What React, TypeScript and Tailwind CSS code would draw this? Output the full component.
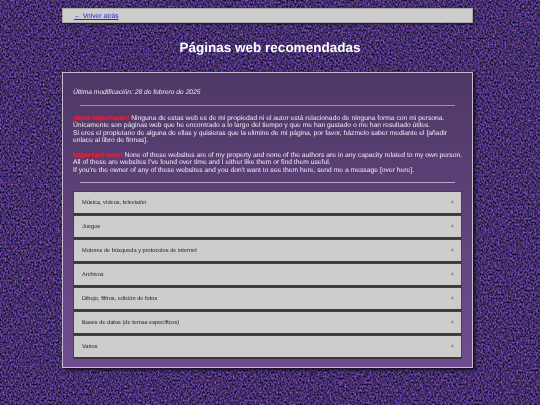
const items = [
  "Música, vídeos, televisión",
  "Juegos",
  "Motores de búsqueda y protocolos de internet",
  "Archivos",
  "Dibujo, filtros, edición de fotos",
  "Bases de datos (de temas específicos)",
  "Varios",
];

const RED = "font-bold text-[#f02838] [text-shadow:0_0_1.5px_#e00020]";

export default function App() {
  return (
    <div className="relative w-[540px] h-[405px] overflow-hidden bg-[#2e2444] font-['Liberation_Sans',Arial,sans-serif] [text-rendering:geometricPrecision]">
      <svg className="absolute inset-0" width="540" height="405" aria-hidden="true">
        <filter id="noise" x="0" y="0" width="100%" height="100%" colorInterpolationFilters="sRGB">
          <feTurbulence type="fractalNoise" baseFrequency="0.6 0.5" numOctaves="2" seed="7" />
          <feColorMatrix
            type="matrix"
            values="0.9 0 0 0 -0.18  0.5 0 0 0 -0.07  1 0.5 0 0 -0.32  0 0 0 0 1"
          />
          <feGaussianBlur stdDeviation="0.35" />
        </filter>
        <rect width="540" height="405" filter="url(#noise)" />
      </svg>
      <div className="relative w-[411px] ml-[62px] pt-2 blur-[0.3px]">
        <div className="h-[15px] flex items-center pl-[11px] pt-[3px] bg-[#cccccc] border border-[#a8a8a8] shadow-[1px_1px_2px_#1a1428]">
          <a href="#" className="text-[6.8px] leading-none text-[#2222ee] underline">← Volver atrás</a>
        </div>
        <h1 className="mt-[16px] h-[17px] pl-[5px] text-center text-[13.5px] leading-[17px] font-bold text-white">
          Páginas web recomendadas
        </h1>
        <div className="mt-[16px] h-[296px] px-[10px] pt-[16px] border border-[#c4bed0] bg-gradient-to-b from-[#4e3866] to-[#704d90] shadow-[2px_2px_3px_#120d1c] text-[#f0eaf5] text-[6.75px] leading-[7.6px]">
          <p className="italic text-[6.7px] leading-[8px]">Última modificación: 28 de febrero de 2025</p>
          <div className="mt-[7.5px] mx-[7px] h-px bg-[#9f90b4]" />
          <p className="mt-[9px] whitespace-nowrap">
            <span className={RED}>¡Nota importante!</span> Ninguna de estas web es de mi propiedad ni el autor está relacionado de ninguna forma con mi persona.<br />
            Únicamente son páginas web que he encontrado a lo largo del tiempo y que me han gustado o me han resultado útiles.<br />
            Si eres el propietario de alguna de ellas y quisieras que la elimine de mi página, por favor, házmelo saber mediante el [añadir<br />
            enlace al libro de firmas].
          </p>
          <p className="mt-[7px] whitespace-nowrap">
            <span className={RED}>Important note!</span> None of these websites are of my property and none of the authors are in any capacity related to my own person.<br />
            All of these are websites I've found over time and I either like them or find them useful.<br />
            If you're the owner of any of these websites and you don't want to see them here, send me a message [over here].
          </p>
          <div className="mt-[7px] mx-[7px] h-px bg-[#b5a8c8]" />
          <div className="mt-2 flex flex-col">
            {items.map((t) => (
              <div
                key={t}
                className="h-[24px] flex items-center justify-between pl-2 pr-[7px] pt-[3px] bg-[#cccccc] border border-[#45404c] border-b-2 border-b-[#3a3a3a] text-[#222222] text-[5.65px]"
              >
                <span>{t}</span>
                <span className="text-[#666666] text-[6px]">+</span>
              </div>
            ))}
          </div>
        </div>
      </div>
    </div>
  );
}
